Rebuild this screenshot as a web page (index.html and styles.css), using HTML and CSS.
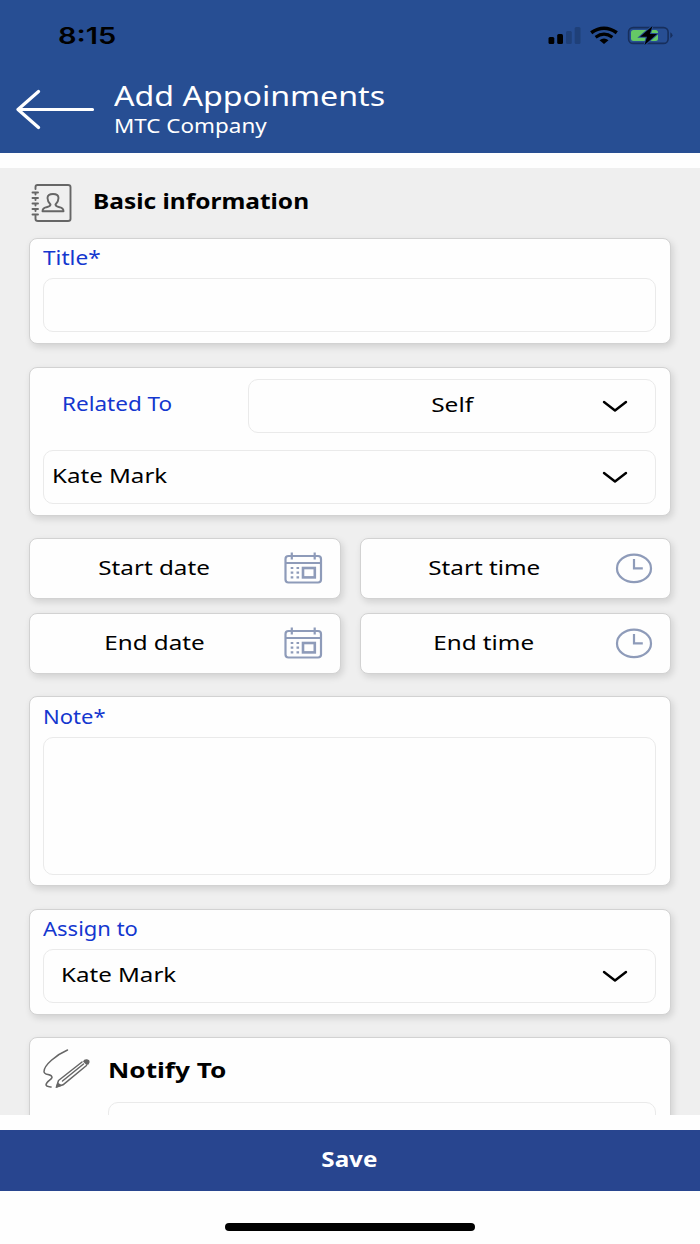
FILE: index.html
```html
<!DOCTYPE html>
<html lang="en">
<head>
<meta charset="utf-8">
<title>Add Appoinments</title>
<link rel="stylesheet" href="styles.css">
</head>
<body>
<svg class="defs" width="0" height="0">
  <symbol id="chevron" viewBox="0 0 26 13"><path d="M2 2 13 10.5 24 2" fill="none" stroke="#000" stroke-width="2.4" stroke-linecap="round" stroke-linejoin="round"/></symbol>
  <symbol id="calendar" viewBox="0 0 40 34">
    <g fill="none" stroke="#8e9bb9" stroke-width="2.2">
      <rect x="1.500" y="4" width="35.500" height="26.500" rx="3"/>
      <path d="M1.500 11H37M7.800 .5V7.500M30.700 .5V7.500"/>
      <rect x="19" y="16" width="11.800" height="9.400" stroke-width="2.600"/>
      <path d="M6.700 16h2.600M12.500 16h2.600M6.700 20.600h2.600M12.500 20.600h2.600M6.700 25.400h2.600M12.500 25.400h2.600"/>
    </g>
  </symbol>
  <symbol id="clock" viewBox="0 0 38 32">
    <g fill="none" stroke="#8e9bb9" stroke-width="2.200"><ellipse cx="19" cy="15.400" rx="17" ry="13.800"/><path d="M19 6V15.400H27.800"/></g>
  </symbol>
</svg>
<div class="screen">
  <header class="header">
    <div class="status">
      <span class="t clock-text">8:15</span>
      <svg class="status-icons" width="128" height="24" viewBox="546 24 128 24">
        <rect x="548.5" y="37" width="5.8" height="7" rx="1.5"/>
        <rect x="557.2" y="34" width="5.8" height="10" rx="1.5"/>
        <rect x="566" y="31" width="5.8" height="13" rx="1.5" fill="#1f4079"/>
        <rect x="574.7" y="27" width="5.8" height="17" rx="1.5" fill="#1f4079"/>
        <path d="M591.2 32.800Q604 23.700 616.800 32.800" fill="none" stroke="#000" stroke-width="3.600"/>
        <path d="M595.600 37.200Q604 31 612.400 37.200" fill="none" stroke="#000" stroke-width="3.200"/>
        <path d="M599.500 40.200Q604 36.800 608.500 40.200L604 44Z"/>
        <rect x="628.600" y="27.600" width="39.500" height="15.800" rx="4.500" fill="none" stroke="#172f5d" stroke-width="1.600"/>
        <path d="M670.300 32.300q4.500 3 0 6z" fill="#172f5d"/>
        <rect x="631" y="30" width="27" height="11" rx="2.500" fill="#65c866"/>
        <path d="M652.500 26 640 36.800h7L644.500 45 657 34h-7.200Z" stroke="#274e93" stroke-width="2" paint-order="stroke"/>
      </svg>
    </div>
    <div class="title-row">
      <svg class="back" width="80" height="42" viewBox="0 0 80 42"><path d="M76.500 20.500H2.500M22.500 2.500 2 20.500 22.500 38.500" fill="none" stroke="#fff" stroke-width="3.200" stroke-linecap="round" stroke-linejoin="round"/></svg>
      <div class="titles"><h1 class="t title">Add Appoinments</h1><span class="t company">MTC Company</span></div>
    </div>
  </header>

  <main class="content">
    <div class="section-head">
      <svg width="42" height="40" viewBox="0 0 42 40"><g fill="none" stroke="#666" stroke-width="1.900" stroke-linecap="round" stroke-linejoin="round">
        <path d="M4.500 6V4Q4.500 2 6.500 2H37Q39.500 2 39.500 4V36Q39.500 38 37 38H7Q4.500 38 4.500 36V33M1.500 9.500H7M1.500 15H7M1.500 20.500H7M1.500 26H7M1.500 31.500H7M4.500 9.500V11.500M4.500 15V17M4.500 20.500V22.500M4.500 26V28"/>
        <path d="M11.500 28.200Q11.500 25.200 15.500 24.200 19.500 23.500 19.500 21.500 16.500 18.500 16.500 15 16.500 11 22 11 27.500 11 27.500 15 27.500 18.500 24.500 21.500 24.500 23.500 28.500 24.200 32.500 25.200 32.500 28.200Z"/>
      </g></svg>
      <h2 class="t basic">Basic information</h2>
    </div>

    <section class="card field-card">
      <label class="t label l-title">Title*</label>
      <div class="box"></div>
    </section>

    <section class="card related">
      <div class="related-row">
        <label class="t label l-related">Related To</label>
        <div class="box select centered"><span class="t v-self">Self</span><svg class="chev"><use href="#chevron"/></svg></div>
      </div>
      <div class="box select"><span class="t v-kate">Kate Mark</span><svg class="chev"><use href="#chevron"/></svg></div>
    </section>

    <div class="pickers">
      <div class="card picker"><div class="pick-text"><span class="t">Start date</span></div><svg width="40" height="34"><use href="#calendar"/></svg></div>
      <div class="card picker time"><div class="pick-text"><span class="t">Start time</span></div><svg width="38" height="32"><use href="#clock"/></svg></div>
      <div class="card picker"><div class="pick-text"><span class="t">End date</span></div><svg width="40" height="34"><use href="#calendar"/></svg></div>
      <div class="card picker time"><div class="pick-text"><span class="t">End time</span></div><svg width="38" height="32"><use href="#clock"/></svg></div>
    </div>

    <section class="card note">
      <label class="t label l-note">Note*</label>
      <div class="box tall"></div>
    </section>

    <section class="card field-card">
      <label class="t label l-assign">Assign to</label>
      <div class="box select indent"><span class="t v-kate">Kate Mark</span><svg class="chev"><use href="#chevron"/></svg></div>
    </section>

    <section class="card notify">
      <div class="notify-head">
        <svg width="50" height="42" viewBox="42 1048 50 42"><g fill="none" stroke="#666" stroke-width="1.500" stroke-linecap="round" stroke-linejoin="round">
          <path d="M67.500 1050C56 1055 44 1065 44 1071.500 44 1076 52 1073 52 1077.500 51.500 1080 46 1081.500 46 1085 46.500 1087 49 1086.500 51 1087"/>
          <path d="M82 1062 58.500 1080.500 56.500 1087 63 1084.800 86.500 1065.500M83.500 1064 62.500 1081"/>
        </g><path d="M83 1061.500Q84 1058.800 87 1059.200 90 1059.800 89.500 1062.500 89 1065 86.500 1065ZM57.500 1082.500 55.500 1088 62.500 1085.500Z" fill="#666"/></svg>
        <h2 class="t notify-title">Notify To</h2>
      </div>
      <div class="box notify-box"></div>
    </section>
  </main>

  <button class="save"><span class="t save-text">Save</span></button>
  <div class="home"></div>
</div>
</body>
</html>
```
FILE: styles.css
```css
* { box-sizing: border-box; }
body { margin: 0; background: #fefefe; font-family: "Noto Sans", sans-serif; color: #000; }
h1, h2 { margin: 0; font-weight: 400; }
svg { display: block; flex: none; }
.defs { position: absolute; }
.screen { width: 700px; height: 1244px; overflow: hidden; display: flex; flex-direction: column; background: #fefefe; }

/* Wide text: each run carries its own horizontal stretch */
.t { display: block; width: max-content; white-space: nowrap; font-size: 20px; line-height: 28px; transform: scaleX(var(--sx, 1.15)); transform-origin: 0 50%; }

.header { height: 153px; flex: none; background: #274e93; color: #fff; }
.status { height: 72px; padding: 24px 26px 0 58px; display: flex; justify-content: space-between; }
.clock-text { font: 600 23px/24px Inter, sans-serif; color: #000; --sx: 1.26; }
.title-row { display: flex; gap: 18px; padding-left: 16px; }
.back { margin-top: 17px; }
.titles { padding-top: 6px; }
.title { font-size: 27px; line-height: 36px; --sx: 1.19; }
.company { font-size: 19px; line-height: 24px; --sx: 1.18; }

.content { height: 947px; flex: none; margin-top: 15px; overflow: hidden; background: #efefef; padding: 0 29px; }
.section-head { height: 70px; display: flex; gap: 20px; padding: 15px 0 0 2px; }
.basic { font-size: 21px; font-weight: 700; line-height: 37px; --sx: 1.165; }

.card { background: #fefefe; border: 1px solid #d2d2d2; border-radius: 8px; box-shadow: 2px 3px 7px rgba(0,0,0,.13); }
.box { height: 54px; border: 1.500px solid #eaeaea; border-radius: 10px; background: #fefefe; }
.label { color: #1437cf; }
.l-title { --sx: 1.13; }
.l-related { --sx: 1.125; padding-bottom: 4px; }
.l-note, .l-assign { --sx: 1.1; }
.v-self { --sx: 1.22; }
.v-kate { --sx: 1.205; }
.field-card { height: 106px; padding: 5px 14px 0 13px; }
.field-card .box { margin-top: 6px; }
.related { height: 149px; margin-top: 23px; padding: 11px 14px 0 13px; }
.related-row { display: flex; justify-content: space-between; align-items: center; padding-left: 19px; margin-bottom: 17px; }
.related-row .box { width: 408px; }
.select { position: relative; display: flex; align-items: center; padding-left: 8px; padding-bottom: 3px; }
.select.indent { padding-left: 17px; }
.select.centered { justify-content: center; padding-left: 0; }
.centered .t { transform-origin: 50% 50%; }
.chev { position: absolute; right: 27px; top: 20px; width: 26px; height: 13px; }
.pickers { margin-top: 22px; display: grid; grid-template-columns: 312px 311px; gap: 14px 19px; }
.picker { height: 61px; display: flex; align-items: center; gap: 5px; }
.pick-text { width: 249px; display: flex; justify-content: center; padding-bottom: 2px; }
.time .pick-text { padding-right: 3px; }
.pick-text .t { transform-origin: 50% 50%; --sx: 1.21; }
.note { height: 190px; margin: 22px 0 23px; padding: 6px 14px 0 13px; }
.tall { height: 138px; margin-top: 6px; }
.notify { height: 120px; margin-top: 22px; padding: 10px 14px 0 12px; }
.notify-head { display: flex; gap: 16px; }
.notify-title { font-size: 22px; font-weight: 700; line-height: 43px; --sx: 1.19; }
.notify-box { margin: 11px 0 0 66px; }

.save { height: 61px; flex: none; margin: 15px 0 0; border: 0; padding: 0 2px 3px 0; background: #28458f; color: #fff; display: flex; align-items: center; justify-content: center; font-family: inherit; }
.save-text { font-weight: 700; font-size: 21px; transform-origin: 50% 50%; }
.home { width: 250px; height: 8px; flex: none; margin: 32px auto 0; border-radius: 4px; background: #000; }
```
